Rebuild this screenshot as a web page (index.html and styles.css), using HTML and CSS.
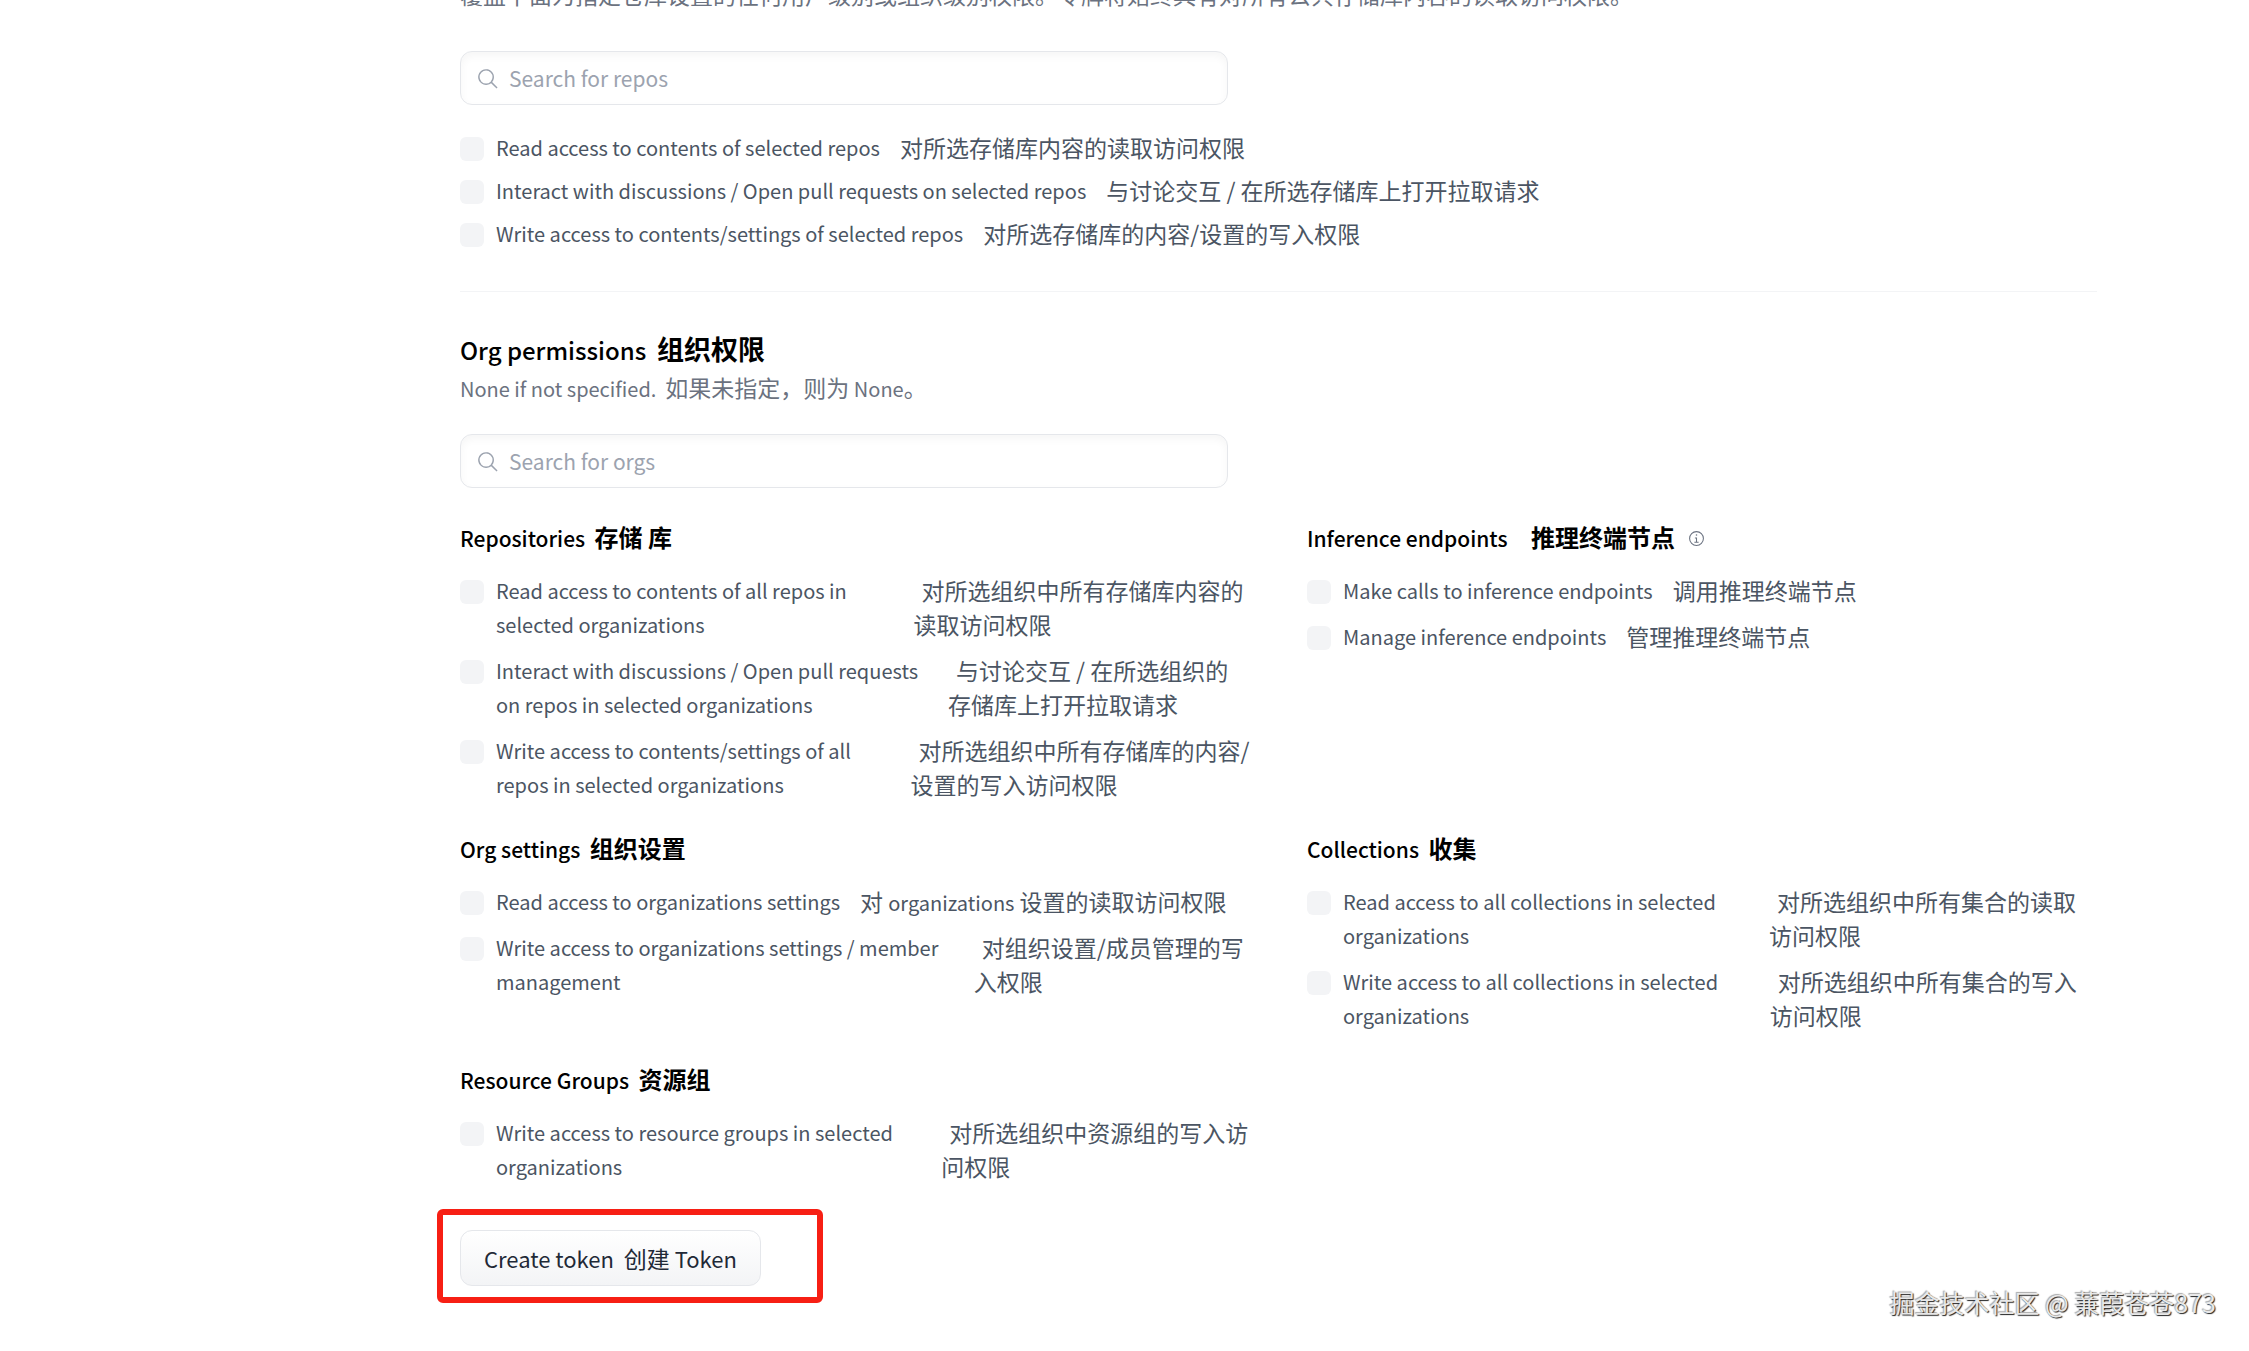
FILE: index.html
```html
<!DOCTYPE html>
<html lang="zh-CN">
<head>
    <meta charset="UTF-8">
    <meta name="viewport" content="width=device-width, initial-scale=1.0">
    <title>Create new Access Token</title>
    <link rel="stylesheet" href="styles.css">
</head>
<body>
    <form class="token-form">
        <section class="repo-section">
            <p class="hint"><span class="zh">覆盖下面为指定仓库设置的任何用户级别或组织级别权限。令牌将始终具有对所有公共存储库内容的读取访问权限。</span></p>
            <div class="search-box">
                <svg class="search-icon" viewBox="0 0 32 32" aria-hidden="true"><path d="M30 28.59 22.45 21A11 11 0 1 0 21 22.45L28.59 30ZM5 14a9 9 0 1 1 9 9 9 9 0 0 1-9-9Z"/></svg>
                <input type="text" placeholder="Search for repos" aria-label="Search for repos">
            </div>
            <div class="options compact">
                <label class="option"><input type="checkbox"><span>Read access to contents of selected repos</span><span class="zh">对所选存储库内容的读取访问权限</span></label>
                <label class="option"><input type="checkbox"><span>Interact with discussions / Open pull requests on selected repos</span><span class="zh">与讨论交互 / 在所选存储库上打开拉取请求</span></label>
                <label class="option"><input type="checkbox"><span>Write access to contents/settings of selected repos</span><span class="zh">对所选存储库的内容/设置的写入权限</span></label>
            </div>
        </section>

        <section class="org-section">
            <h2>Org permissions&nbsp; <span class="zh">组织权限</span></h2>
            <p class="hint">None if not specified.&nbsp; <span class="zh">如果未指定，则为</span> None<span class="zh">。</span></p>
            <div class="search-box">
                <svg class="search-icon" viewBox="0 0 32 32" aria-hidden="true"><path d="M30 28.59 22.45 21A11 11 0 1 0 21 22.45L28.59 30ZM5 14a9 9 0 1 1 9 9 9 9 0 0 1-9-9Z"/></svg>
                <input type="text" placeholder="Search for orgs" aria-label="Search for orgs">
            </div>

            <div class="groups">
                <div class="group">
                    <h3>Repositories&nbsp; <span class="zh">存储 库</span></h3>
                    <div class="options">
                        <label class="option"><input type="checkbox"><span>Read access to contents of all repos in selected organizations</span><span class="zh">对所选组织中所有存储库内容的读取访问权限</span></label>
                        <label class="option"><input type="checkbox"><span>Interact with discussions / Open pull requests on repos in selected organizations</span><span class="zh">与讨论交互 / 在所选组织的存储库上打开拉取请求</span></label>
                        <label class="option"><input type="checkbox"><span>Write access to contents/settings of all repos in selected organizations</span><span class="zh">对所选组织中所有存储库的内容/设置的写入访问权限</span></label>
                    </div>
                </div>
                <div class="group">
                    <h3>Inference endpoints&nbsp; &nbsp;&nbsp;&nbsp;<span class="zh">推理终端节点</span>
                        <svg class="info-icon" viewBox="0 0 32 32" aria-hidden="true"><path d="M17 22v-8h-4v2h2v6h-3v2h8v-2zM16 8a1.500 1.500 0 1 0 1.500 1.500A1.500 1.500 0 0 0 16 8Z"/><path d="M16 30a14 14 0 1 1 14-14 14 14 0 0 1-14 14Zm0-26a12 12 0 1 0 12 12A12 12 0 0 0 16 4Z"/></svg>
                    </h3>
                    <div class="options">
                        <label class="option"><input type="checkbox"><span>Make calls to inference endpoints</span><span class="zh">调用推理终端节点</span></label>
                        <label class="option"><input type="checkbox"><span>Manage inference endpoints</span><span class="zh">管理推理终端节点</span></label>
                    </div>
                </div>
                <div class="group">
                    <h3>Org settings&nbsp; <span class="zh">组织设置</span></h3>
                    <div class="options">
                        <label class="option"><input type="checkbox"><span>Read access to organizations settings</span><span class="zh">对 <span class="en">organizations</span> 设置的读取访问权限</span></label>
                        <label class="option"><input type="checkbox"><span>Write access to organizations settings / member management</span><span class="zh">对组织设置/成员管理的写入权限</span></label>
                    </div>
                </div>
                <div class="group">
                    <h3>Collections&nbsp; <span class="zh">收集</span></h3>
                    <div class="options">
                        <label class="option"><input type="checkbox"><span>Read access to all collections in selected organizations</span><span class="zh">对所选组织中所有集合的读取访问权限</span></label>
                        <label class="option"><input type="checkbox"><span>Write access to all collections in selected organizations</span><span class="zh">对所选组织中所有集合的写入访问权限</span></label>
                    </div>
                </div>
                <div class="group">
                    <h3>Resource Groups&nbsp; <span class="zh">资源组</span></h3>
                    <div class="options">
                        <label class="option"><input type="checkbox"><span>Write access to resource groups in selected organizations</span><span class="zh">对所选组织中资源组的写入访问权限</span></label>
                    </div>
                </div>
            </div>
        </section>

        <div class="highlight">
            <button type="button" class="create-btn">Create token&nbsp; <span class="zh">创建</span> Token</button>
        </div>
    </form>
    <div class="watermark">掘金技术社区 @ 蒹葭苍苍873</div>
</body>
</html>
```
FILE: styles.css
```css
* {
    box-sizing: border-box;
}

body {
    margin: 0;
    background-color: #ffffff;
    color: #4b5563;
    font-family: "Noto Sans CJK SC", sans-serif;
    font-size: 20px;
    line-height: 34px;
}

h2, h3, p {
    margin: 0;
}

.token-form {
    margin: -21px 152px 0 460px;
}

/* Chinese text runs a little larger than the latin text */
.zh {
    font-size: 23px;
    line-height: 1;
}

.en {
    font-size: 20px;
    line-height: 1;
}

.hint {
    color: #6b7280;
}

.repo-section {
    padding-bottom: 40px;
    border-bottom: 1px solid #f3f4f6;
}

.org-section {
    padding-top: 38px;
}

h2 {
    margin-bottom: 2px;
    color: #000000;
    font-size: 24px;
    font-weight: 500;
    line-height: 40px;
}

h2 .zh {
    font-size: 27px;
    font-weight: 700;
}

h3 {
    margin-bottom: 19px;
    color: #000000;
    font-size: 21px;
    font-weight: 500;
}

h3 .zh {
    font-size: 24px;
    font-weight: 700;
}

/* search field */
.search-box {
    position: relative;
    max-width: 768px;
    margin-top: 38px;
}

.org-section .search-box {
    margin-top: 28px;
}

.search-box input {
    display: block;
    width: 100%;
    height: 54px;
    padding: 0 16px 0 48px;
    border: 1px solid #e5e7eb;
    border-radius: 12px;
    background-color: #ffffff;
    box-shadow: inset 0 4px 8px rgba(0, 0, 0, 0.04);
    color: #374151;
    font-family: inherit;
    font-size: 21px;
}

.search-box input::placeholder {
    color: #9ca3af;
    opacity: 1;
}

.search-icon {
    position: absolute;
    top: 16px;
    left: 16px;
    width: 23px;
    height: 23px;
    fill: #9ca3af;
}

/* permission check boxes */
.options {
    display: flex;
    flex-direction: column;
    gap: 12px;
}

.compact {
    gap: 9px;
    margin-top: 26px;
}

.option {
    display: flex;
    align-items: flex-start;
    gap: 12px;
}

.option input {
    flex: none;
    appearance: none;
    width: 24px;
    height: 24px;
    margin: 6px 0 0;
    border-radius: 6px;
    background-color: #f3f4f6;
}

.option input:checked {
    background-color: #3b82f6;
}

.option > .zh {
    margin-top: -1px;
    line-height: 34px;
    text-indent: 8px;
}

.groups {
    display: grid;
    grid-template-columns: 1fr 1fr;
    gap: 30px 57px;
    margin-top: 33px;
}

.info-icon {
    width: 17px;
    height: 17px;
    margin-left: 8px;
    fill: #6b7280;
}

/* red frame round the submit button */
.highlight {
    width: 386px;
    margin: 25px 0 0 -23px;
    padding: 15px 17px 11px;
    border: 6px solid #f71f14;
    border-radius: 6px;
}

.create-btn {
    display: block;
    height: 56px;
    padding: 0 23px;
    border: 1px solid #e5e7eb;
    border-radius: 12px;
    background: linear-gradient(#ffffff, #f3f4f6);
    color: #1f2937;
    font-family: inherit;
    font-size: 22px;
    cursor: pointer;
}

.watermark {
    position: absolute;
    right: 33px;
    bottom: 32px;
    color: #e8e8e8;
    font-size: 25px;
    text-shadow: 1px 1px 1px #222222, -1px -1px 1px #aaaaaa;
}
```
